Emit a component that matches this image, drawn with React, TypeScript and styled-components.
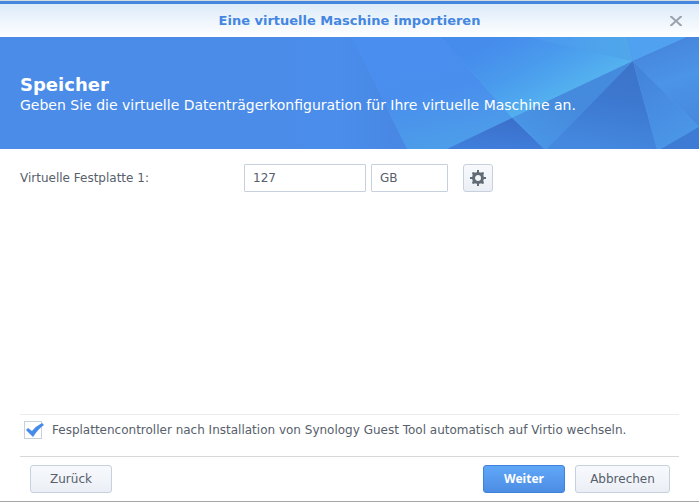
import React, { useState } from "react";
import styled, { createGlobalStyle, css } from "styled-components";

const GlobalStyle = createGlobalStyle`
  * { box-sizing: border-box; }
  body {
    margin: 0;
    background: #fff;
    color: #57606b;
    font: 12px/18px "DejaVu Sans", Verdana, sans-serif;
  }
`;

const Dialog = styled.main`
  display: flex;
  flex-direction: column;
  min-height: 100vh;
  border-top: 1px solid #d5d9dc;
  border-bottom: 1px solid #a3a5a8;
  background: #fff;
`;

const TitleBar = styled.header`
  display: grid;
  grid-template-columns: 46px 1fr 46px;
  align-items: center;
  height: 36px;
  border-top: 3px solid #4486e0;
  background: linear-gradient(#dcebf9, #fff);
`;

const Title = styled.h1`
  grid-column: 2;
  margin: 0;
  color: #4486e0;
  font-size: 13px;
  line-height: 18px;
  text-align: center;
`;

const CloseButton = styled.button`
  display: flex;
  justify-content: center;
  padding: 8px;
  border: 0;
  background: none;
  color: #9aa3ad;
`;

const Banner = styled.section`
  position: relative;
  height: 112px;
  padding: 38px 20px 0;
  overflow: hidden;
  background: #4b8ce8;
  color: #fff;
`;

const Facets = styled.svg`
  position: absolute;
  top: 0;
  right: 0;
`;

const BannerText = styled.div`
  position: relative;
`;

const Heading = styled.h2`
  margin: 0;
  font-size: 18px;
  line-height: 20px;
`;

const Lead = styled.p`
  margin: 0;
  font-size: 14px;
  line-height: 20px;
`;

const Body = styled.section`
  flex: 1;
  padding: 15px 20px 0;
`;

const DiskRow = styled.div`
  display: grid;
  grid-template-columns: 224px 122px 82px 50px;
  align-items: center;
`;

const fieldStyle = css`
  height: 28px;
  padding: 0 8px;
  border: 1px solid #c6d1dd;
  border-radius: 1px;
  background: #fff;
  color: #57606b;
  font: inherit;
  appearance: none;
`;

const SizeInput = styled.input`
  ${fieldStyle}
`;

const UnitInput = styled.input`
  ${fieldStyle}
  margin-left: 5px;
  width: 77px;
`;

const Button = styled.button<{ $primary?: boolean; $width: number }>`
  display: flex;
  align-items: center;
  justify-content: center;
  width: ${(p) => p.$width}px;
  height: 28px;
  padding: 0;
  border: 1px solid ${(p) => (p.$primary ? "#3f82dc" : "#c6d1dd")};
  border-radius: 3px;
  background: ${(p) =>
    p.$primary ? "linear-gradient(#60a7f8, #4c8de4)" : "linear-gradient(#f7f9fd, #ebeff5)"};
  color: ${(p) => (p.$primary ? "#fff" : "#57606b")};
  font: inherit;
  ${(p) => p.$primary && css`
    font-family: "Noto Sans", sans-serif;
    font-weight: 700;
  `}
`;

const GearButton = styled(Button)`
  margin-left: 15px;
`;

const OptionRow = styled.div`
  display: flex;
  align-items: center;
  height: 42px;
  margin: 0 20px;
  padding: 0 4px 12px;
  border-top: 1px solid #ececec;
`;

const CheckWrap = styled.span`
  display: grid;
  width: 20px;
  height: 18px;
  margin-right: 8px;

  & > * { grid-area: 1 / 1; }
`;

const CheckInput = styled.input`
  width: 18px;
  height: 18px;
  margin: 0;
  border: 1px solid #c6d1dd;
  background: #fff;
  appearance: none;

  &:not(:checked) + svg { visibility: hidden; }
`;

const CheckMark = styled.svg`
  pointer-events: none;
`;

const Footer = styled.footer`
  display: flex;
  gap: 10px;
  margin: 0 20px;
  padding: 8px 9px 8px 10px;
  border-top: 1px solid #d8d8d8;
`;

const Spacer = styled.span`
  flex: 1;
`;

function FacetArt() {
  return (
    <Facets width="419" height="112" viewBox="280 0 419 112" aria-hidden="true">
      <defs>
        <linearGradient id="left" x1="0" x2="1">
          <stop offset="0" stopColor="#4b8ce8" />
          <stop offset=".45" stopColor="#4a8deb" />
          <stop offset="1" stopColor="#4887e2" />
        </linearGradient>
        <linearGradient id="mid" x1=".3" y1="0" x2=".6" y2="1">
          <stop offset="0" stopColor="#4a8ef0" />
          <stop offset=".5" stopColor="#498eed" />
          <stop offset="1" stopColor="#4d9ee9" />
        </linearGradient>
        <linearGradient id="wide" gradientUnits="userSpaceOnUse" x1="500" y1="0" x2="540" y2="75">
          <stop offset="0" stopColor="#468cec" />
          <stop offset=".45" stopColor="#499aed" />
          <stop offset="1" stopColor="#55b3ef" />
        </linearGradient>
        <linearGradient id="top" x1="0" x2="1">
          <stop offset="0" stopColor="#4b96ef" />
          <stop offset=".5" stopColor="#4da1ed" />
          <stop offset="1" stopColor="#50a7e9" />
        </linearGradient>
        <linearGradient id="slant" x1="1" y1="0" x2="0" y2="1">
          <stop offset="0" stopColor="#448cdd" />
          <stop offset=".5" stopColor="#458add" />
          <stop offset="1" stopColor="#4b99e9" />
        </linearGradient>
        <linearGradient id="dark" x1=".8" y1="0" x2=".6" y2="1">
          <stop offset="0" stopColor="#3c73c8" />
          <stop offset=".5" stopColor="#3d79d0" />
          <stop offset="1" stopColor="#4588df" />
        </linearGradient>
        <linearGradient id="bottom" x1=".7" y1="0" x2=".4" y2="1">
          <stop offset="0" stopColor="#3a6fca" />
          <stop offset="1" stopColor="#407edb" />
        </linearGradient>
        <linearGradient id="right" gradientUnits="userSpaceOnUse" x1="660" y1="0" x2="690" y2="85">
          <stop offset="0" stopColor="#4584da" />
          <stop offset=".5" stopColor="#4b94e7" />
          <stop offset="1" stopColor="#4789df" />
        </linearGradient>
        <linearGradient id="lower" x1="0" y1="0" x2=".5" y2="1">
          <stop offset="0" stopColor="#4281d9" />
          <stop offset="1" stopColor="#4b96e7" />
        </linearGradient>
      </defs>
      <rect x="280" width="419" height="112" fill="#4b8ce8" />
      <path d="M280 0H352L407 112H280Z" fill="url(#left)" />
      <path d="M352 0H440L512 81L447 112H407Z" fill="url(#mid)" />
      <path d="M440 0H530L633 24L512 81Z" fill="url(#wide)" />
      <path d="M530 0H627L633 24Z" fill="url(#top)" />
      <path d="M627 0H687L633 24Z" fill="#50a2f1" />
      <path d="M633 24L512 81L544 112H547Z" fill="url(#slant)" />
      <path d="M512 81L447 112H544Z" fill="url(#bottom)" />
      <path d="M633 24L547 112H657Z" fill="url(#dark)" />
      <path d="M687 0H699V90L633 24Z" fill="url(#right)" />
      <path d="M633 24L657 112H661L699 90Z" fill="url(#lower)" />
      <path d="M699 90L661 112H699Z" fill="#3e7bd5" />
      <path
        d="M440 0L544 112M530 0L633 24M633 24L699 90M633 24L657 112"
        fill="none"
        stroke="#65b5f4"
        strokeOpacity=".15"
      />
    </Facets>
  );
}

function Gear() {
  return (
    <svg width="16" height="16" viewBox="0 0 16 16" aria-hidden="true">
      <g fill="#626a76">
        <path d="M7 0H9V4H7ZM7 16H9V12H7ZM0 7V9H4V7ZM16 7V9H12V7Z" />
        <path d="M2 3L3 2L6 3L3 6ZM13 2L14 3L13 6L10 3ZM2 13L3 14L6 13L3 10ZM13 14L14 13L13 10L10 13Z" />
      </g>
      <circle cx="8" cy="8" r="4.5" fill="none" stroke="#626a76" strokeWidth="3" />
    </svg>
  );
}

export default function App() {
  const [size, setSize] = useState("127");
  const [unit, setUnit] = useState("GB");
  const [virtio, setVirtio] = useState(true);

  return (
    <>
      <GlobalStyle />
      <Dialog>
        <TitleBar>
          <Title>Eine virtuelle Maschine importieren</Title>
          <CloseButton type="button" aria-label="Schließen">
            <svg width="12" height="12" viewBox="0 0 12 12" aria-hidden="true">
              <path d="M0 1H2L6 4.7L10 1H12V2L7.5 6L12 10V11H10L6 7.3L2 11H0V10L4.5 6L0 2Z" fill="currentColor" />
            </svg>
          </CloseButton>
        </TitleBar>
        <Banner>
          <FacetArt />
          <BannerText>
            <Heading>Speicher</Heading>
            <Lead>Geben Sie die virtuelle Datenträgerkonfiguration für Ihre virtuelle Maschine an.</Lead>
          </BannerText>
        </Banner>
        <Body>
          <DiskRow>
            <label htmlFor="disk-size">Virtuelle Festplatte 1:</label>
            <SizeInput id="disk-size" value={size} onChange={(e) => setSize(e.target.value)} />
            <UnitInput aria-label="Einheit" value={unit} onChange={(e) => setUnit(e.target.value)} />
            <GearButton type="button" $width={30} aria-label="Einstellungen">
              <Gear />
            </GearButton>
          </DiskRow>
        </Body>
        <OptionRow>
          <CheckWrap>
            <CheckInput
              id="virtio"
              type="checkbox"
              checked={virtio}
              onChange={(e) => setVirtio(e.target.checked)}
            />
            <CheckMark width="20" height="18" viewBox="0 0 20 18" aria-hidden="true">
              <path d="M2 9L4 7L8 10Q12 5 18 2L20 4Q14 8 9 16Z" fill="#468bea" />
            </CheckMark>
          </CheckWrap>
          <label htmlFor="virtio">
            Fesplattencontroller nach Installation von Synology Guest Tool automatisch auf Virtio wechseln.
          </label>
        </OptionRow>
        <Footer>
          <Button type="button" $width={82}>Zurück</Button>
          <Spacer />
          <Button type="button" $primary $width={82}>Weiter</Button>
          <Button type="button" $width={95}>Abbrechen</Button>
        </Footer>
      </Dialog>
    </>
  );
}
